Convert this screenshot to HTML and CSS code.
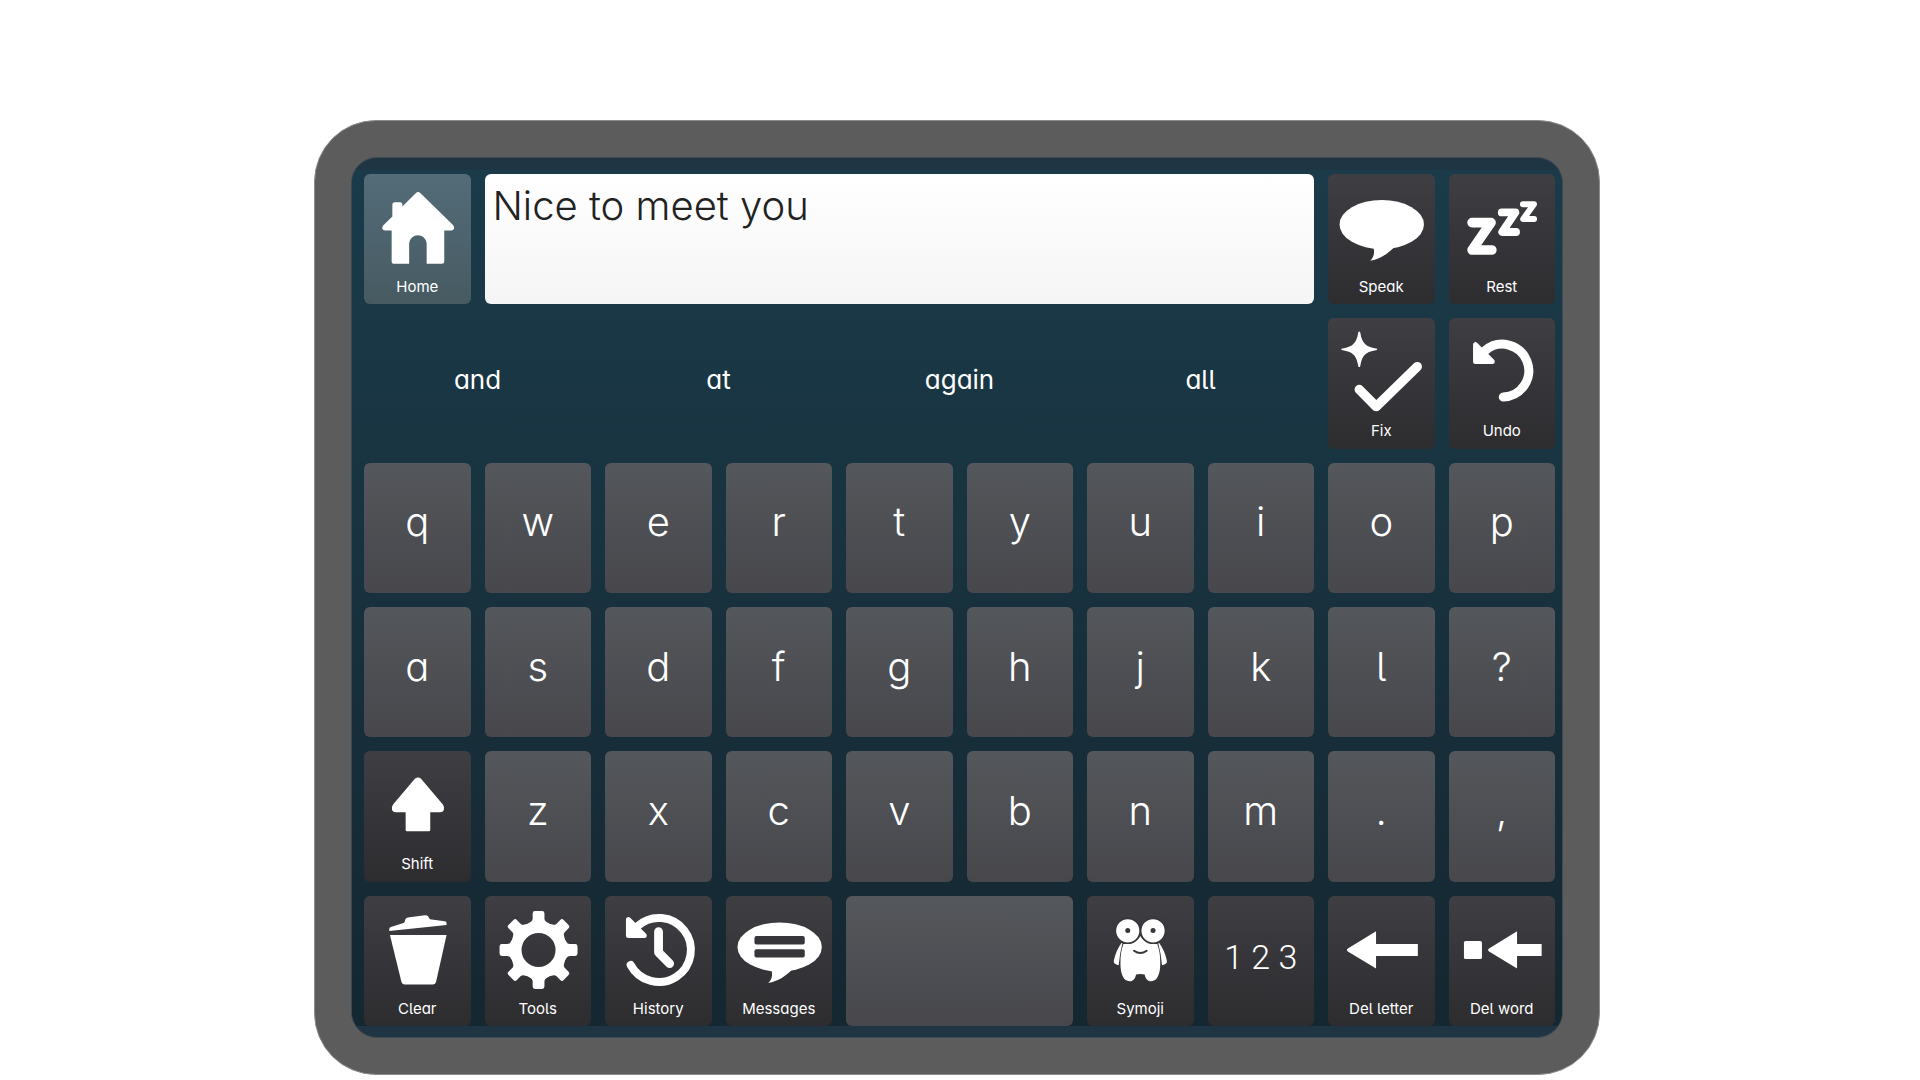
FILE: index.html
```html
<!DOCTYPE html>
<html lang="en">
<head>
    <meta charset="UTF-8">
    <meta name="viewport" content="width=device-width, initial-scale=1.0">
    <title>Keyboard</title>
    <link rel="stylesheet" href="styles.css">
</head>
<body>
    <main class="device">
        <div class="screen">
            <div class="board">
                <button type="button" class="key home">
                    <svg class="icon" viewBox="0 0 106 100" aria-hidden="true">
                        <path d="M51.5 19.2Q53.9 17 56.3 19.2L88.5 50.8Q90.5 53 89.6 55Q89 56.4 87 56.4H80V87.5Q80 89.8 77.5 89.8H62.4V69A8.8 8.8 0 0 0 44.9 69V89.8H30Q27.4 89.8 27.4 87.5V56.4H21Q18.6 56.4 18.2 55Q17.6 53 19.4 51L28.1 42.4V31Q28.1 28.3 30.6 28.3H35.8Q38.1 28.3 38.1 31V32.6Z"/>
                    </svg>
                    <span class="label">Home</span>
                </button>
                <textarea class="message" aria-label="Message">Nice to meet you</textarea>
                <button type="button" class="key action">
                    <svg class="icon" viewBox="0 0 106 100" aria-hidden="true">
                        <ellipse cx="53.5" cy="50.5" rx="42.2" ry="24.5"/>
                        <path d="M45.2 73C46.6 79 45.6 83 42 86.8C52 85 59 80 66 73.2L60 68H46Z"/>
                    </svg>
                    <span class="label">Speak</span>
                </button>
                <button type="button" class="key action">
                    <svg class="icon line" viewBox="0 0 106 100" aria-hidden="true">
                        <path stroke-width="9.6" d="M22.8 48.6H41.8L22.8 76H42.6"/>
                        <path stroke-width="7.8" d="M52.5 38.4H66.2L53 58H66.8"/>
                        <path stroke-width="6" d="M73.7 30.2H84.7L74 45H84.8"/>
                    </svg>
                    <span class="label">Rest</span>
                </button>

                <button type="button" class="word">and</button>
                <button type="button" class="word">at</button>
                <button type="button" class="word">again</button>
                <button type="button" class="word">all</button>
                <button type="button" class="key action">
                    <svg class="icon" viewBox="0 0 106 100" aria-hidden="true">
                        <path d="M31 13.5C32 13.5 32 14.6 32.3 16C34 25 37.5 28.6 46.4 30.2C48 30.5 49 30.5 49 31.3C49 32.1 48 32.1 46.4 32.4C37.5 34 34 37.5 32.3 46.4C32 48 32 49 31 49C30 49 30 48 29.7 46.4C28 37.5 24.5 34 15.6 32.4C14 32.1 13 32.1 13 31.3C13 30.5 14 30.5 15.6 30.2C24.5 28.6 28 25 29.7 16C30 14.6 30 13.5 31 13.5Z"/>
                        <path class="line" stroke-width="9.4" d="M31 71.5L48 88.6L89 48.6"/>
                    </svg>
                    <span class="label">Fix</span>
                </button>
                <button type="button" class="key action">
                    <svg class="icon" viewBox="0 0 106 100" aria-hidden="true">
                        <path class="line" stroke-width="9" d="M54 79A26.4 26.4 0 1 0 36 32.5"/>
                        <path class="soft" d="M26.3 26.7V43.4H43Z"/>
                    </svg>
                    <span class="label">Undo</span>
                </button>

                <button type="button" class="key letter">q</button>
                <button type="button" class="key letter">w</button>
                <button type="button" class="key letter">e</button>
                <button type="button" class="key letter">r</button>
                <button type="button" class="key letter">t</button>
                <button type="button" class="key letter">y</button>
                <button type="button" class="key letter">u</button>
                <button type="button" class="key letter">i</button>
                <button type="button" class="key letter">o</button>
                <button type="button" class="key letter">p</button>

                <button type="button" class="key letter">a</button>
                <button type="button" class="key letter">s</button>
                <button type="button" class="key letter">d</button>
                <button type="button" class="key letter">f</button>
                <button type="button" class="key letter">g</button>
                <button type="button" class="key letter">h</button>
                <button type="button" class="key letter">j</button>
                <button type="button" class="key letter">k</button>
                <button type="button" class="key letter">l</button>
                <button type="button" class="key letter">?</button>

                <button type="button" class="key action">
                    <svg class="icon" viewBox="0 0 106 100" aria-hidden="true">
                        <path d="M50.6 27.8Q53.7 25.2 56.8 27.8L78.6 53.6Q80.6 56.4 79.6 59Q78.6 61.3 76 61.3H66V79Q66 80.3 64.6 80.3H42.8Q41.4 80.3 41.4 79V61.3H31.4Q28.8 61.3 27.8 59Q26.8 56.4 28.8 53.6Z"/>
                    </svg>
                    <span class="label">Shift</span>
                </button>
                <button type="button" class="key letter">z</button>
                <button type="button" class="key letter">x</button>
                <button type="button" class="key letter">c</button>
                <button type="button" class="key letter">v</button>
                <button type="button" class="key letter">b</button>
                <button type="button" class="key letter">n</button>
                <button type="button" class="key letter">m</button>
                <button type="button" class="key letter">.</button>
                <button type="button" class="key letter">,</button>

                <button type="button" class="key action">
                    <svg class="icon" viewBox="0 0 106 100" aria-hidden="true">
                        <path d="M25.7 39H82.3L71.8 86Q71.2 88.4 68.8 88.4H40.2Q37.8 88.4 37.2 86Z"/>
                        <path d="M25 35V33Q25 31.6 26.6 31L40 26.8L41 23.4Q41.6 22 43.4 21.6L60.6 19.3Q62.8 19 64 20.6L65.6 23.2L80.4 25.2Q82.3 25.5 82.3 27V29Z"/>
                    </svg>
                    <span class="label">Clear</span>
                </button>
                <button type="button" class="key action">
                    <svg class="icon" viewBox="0 0 106 100" aria-hidden="true">
                        <defs>
                            <path id="tooth" d="M47.4 17.4Q47.4 15 49.8 15H56.8Q59.2 15 59.2 17.4V23Q59.4 25.2 61.4 26L66 29L53.3 36L40.6 29L45.2 26Q47.2 25.2 47.4 23Z"/>
                        </defs>
                        <circle class="line" cx="53.3" cy="54" r="22.5" stroke-width="11"/>
                        <use href="#tooth"/>
                        <use href="#tooth" transform="rotate(45 53.3 54)"/>
                        <use href="#tooth" transform="rotate(90 53.3 54)"/>
                        <use href="#tooth" transform="rotate(135 53.3 54)"/>
                        <use href="#tooth" transform="rotate(180 53.3 54)"/>
                        <use href="#tooth" transform="rotate(225 53.3 54)"/>
                        <use href="#tooth" transform="rotate(270 53.3 54)"/>
                        <use href="#tooth" transform="rotate(315 53.3 54)"/>
                    </svg>
                    <span class="label">Tools</span>
                </button>
                <button type="button" class="key action">
                    <svg class="icon" viewBox="0 0 106 100" aria-hidden="true">
                        <path class="line" stroke-width="8" d="M25.4 69A32 32 0 1 0 32 30.4"/>
                        <path class="soft" d="M23.2 23.6V39.6H39Z"/>
                        <path class="line" stroke-width="8.8" d="M53.3 35.6V56.4L64.4 67.6"/>
                    </svg>
                    <span class="label">History</span>
                </button>
                <button type="button" class="key action">
                    <svg class="icon" viewBox="0 0 106 100" aria-hidden="true">
                        <ellipse cx="53.4" cy="51" rx="42.2" ry="24.5"/>
                        <path d="M45.2 73.5C46.6 79.5 45.6 83.5 42 87C52 85.4 59 80.4 66 73.6L60 68.4H46Z"/>
                        <rect class="cut" x="28.2" y="40" width="50.3" height="8.4" rx="2"/>
                        <rect class="cut" x="28.2" y="53.2" width="50.3" height="8.4" rx="2"/>
                    </svg>
                    <span class="label">Messages</span>
                </button>
                <button type="button" class="key space" aria-label="Space"></button>
                <button type="button" class="key action">
                    <svg class="icon" viewBox="0 0 106 100" aria-hidden="true">
                        <path d="M34.6 46.6Q29 54 26.6 64.4Q25.8 68 31.4 69.2Q32.4 58 35.2 47Z"/>
                        <path d="M71.6 46.6Q77.2 54 79.6 64.4Q80.4 68 74.8 69.2Q73.8 58 71 47Z"/>
                        <path d="M53.1 40C55 44 60 48 70 48Q73.2 56 73 68C73 78 70 85.2 63.8 85.2C60 85.2 58 82 57.4 78.4Q53 77.4 48.8 78.4C48.2 82 46.2 85.2 42.4 85.2C36.2 85.2 33.2 78 33.2 68Q33 56 36.2 48C46 48 51 44 53.1 40Z"/>
                        <circle class="eye" cx="40.5" cy="34.8" r="12.4"/>
                        <circle class="eye" cx="65.8" cy="34.8" r="12.4"/>
                        <circle class="cut" cx="40.5" cy="34.6" r="2.5"/>
                        <circle class="cut" cx="65.8" cy="34.6" r="2.5"/>
                        <path class="smile" d="M46.8 54.8Q53.1 59.4 59.4 54.8"/>
                    </svg>
                    <span class="label">Symoji</span>
                </button>
                <button type="button" class="key action digits">1 2 3</button>
                <button type="button" class="key action">
                    <svg class="icon" viewBox="0 0 106 100" aria-hidden="true">
                        <path d="M18.6 54Q18.6 53.2 19.6 52.6L47.8 35.2V48H89.6V60H47.8V72.6L19.6 55.4Q18.6 54.8 18.6 54Z"/>
                    </svg>
                    <span class="label">Del letter</span>
                </button>
                <button type="button" class="key action">
                    <svg class="icon" viewBox="0 0 106 100" aria-hidden="true">
                        <rect x="14.7" y="45" width="18" height="18" rx="1.6"/>
                        <path d="M38.8 54Q38.8 53.2 39.8 52.4L67.8 35.2V48H92.4V60H67.8V72.6L39.8 55.6Q38.8 54.8 38.8 54Z"/>
                    </svg>
                    <span class="label">Del word</span>
                </button>
            </div>
        </div>
    </main>
</body>
</html>
```
FILE: styles.css
```css
* {
    box-sizing: border-box;
}

body {
    margin: 0;
    padding: 120px 320px 0 314px;
    background: #fff;
    font-family: Inter, "Liberation Sans", sans-serif;
    font-feature-settings: "cv11", "cv05"; /* single-storey a, l with a tail */
}

.device {
    display: grid;
    aspect-ratio: 1286 / 955;
    padding: 36px;
    border: 1px solid #8c8c8c;
    border-radius: 62px;
    background: #5c5c5c;
}

.screen {
    display: grid;
    padding: 12px 0 11px;
    border: 1px solid #3c4a54;
    border-radius: 26px;
    background: #1f3543;
    overflow: hidden;
}

.board {
    display: grid;
    grid-template-columns: repeat(10, minmax(0, 1fr));
    grid-template-rows: repeat(6, minmax(0, 1fr));
    gap: 14px;
    padding: 4px 7px 0 12px;
    background: linear-gradient(#1b3b4a, #152731);
}

button {
    margin: 0;
    padding: 0;
    border: none;
    background: none;
    color: #fff;
    font: inherit;
    font-feature-settings: inherit;
    cursor: pointer;
}

.key {
    display: flex;
    flex-direction: column;
    align-items: center;
    border-radius: 6px;
}

.letter,
.space {
    background: linear-gradient(#54575b, #47474c);
}

.letter {
    justify-content: center;
    padding-bottom: 12px;
    font-size: 40px;
    font-weight: 350;
}

.space {
    grid-column: span 2;
}

.action {
    background: linear-gradient(#3e3e43, #2d2d30);
}

.home {
    background: linear-gradient(#536c78, #475a62);
}

.digits {
    justify-content: center;
    padding-bottom: 8px;
    font-family: Roboto, sans-serif;
    font-size: 34px;
    font-weight: 350;
}

.word {
    grid-column: span 2;
    padding-bottom: 8px;
    font-size: 26px;
}

.message {
    grid-column: span 7;
    padding: 8px;
    border: none;
    border-radius: 6px;
    background: linear-gradient(#fff, #f5f5f5);
    color: #222;
    font-family: inherit;
    font-feature-settings: inherit;
    font-size: 40px;
    font-weight: 350;
    line-height: 48px;
    resize: none;
    outline: none;
}

.label {
    font-size: 15px;
    line-height: 26px;
}

.icon {
    width: 100%;
    height: 100px;
    fill: #fff;
}

.line {
    fill: none;
    stroke: #fff;
    stroke-linecap: round;
    stroke-linejoin: round;
}

.soft {
    stroke: #fff;
    stroke-width: 5;
    stroke-linejoin: round;
}

.cut {
    fill: #37373b;
}

.eye {
    stroke: #37373b;
    stroke-width: 1.6;
}

.smile {
    fill: none;
    stroke: #37373b;
    stroke-width: 2;
    stroke-linecap: round;
}
```
